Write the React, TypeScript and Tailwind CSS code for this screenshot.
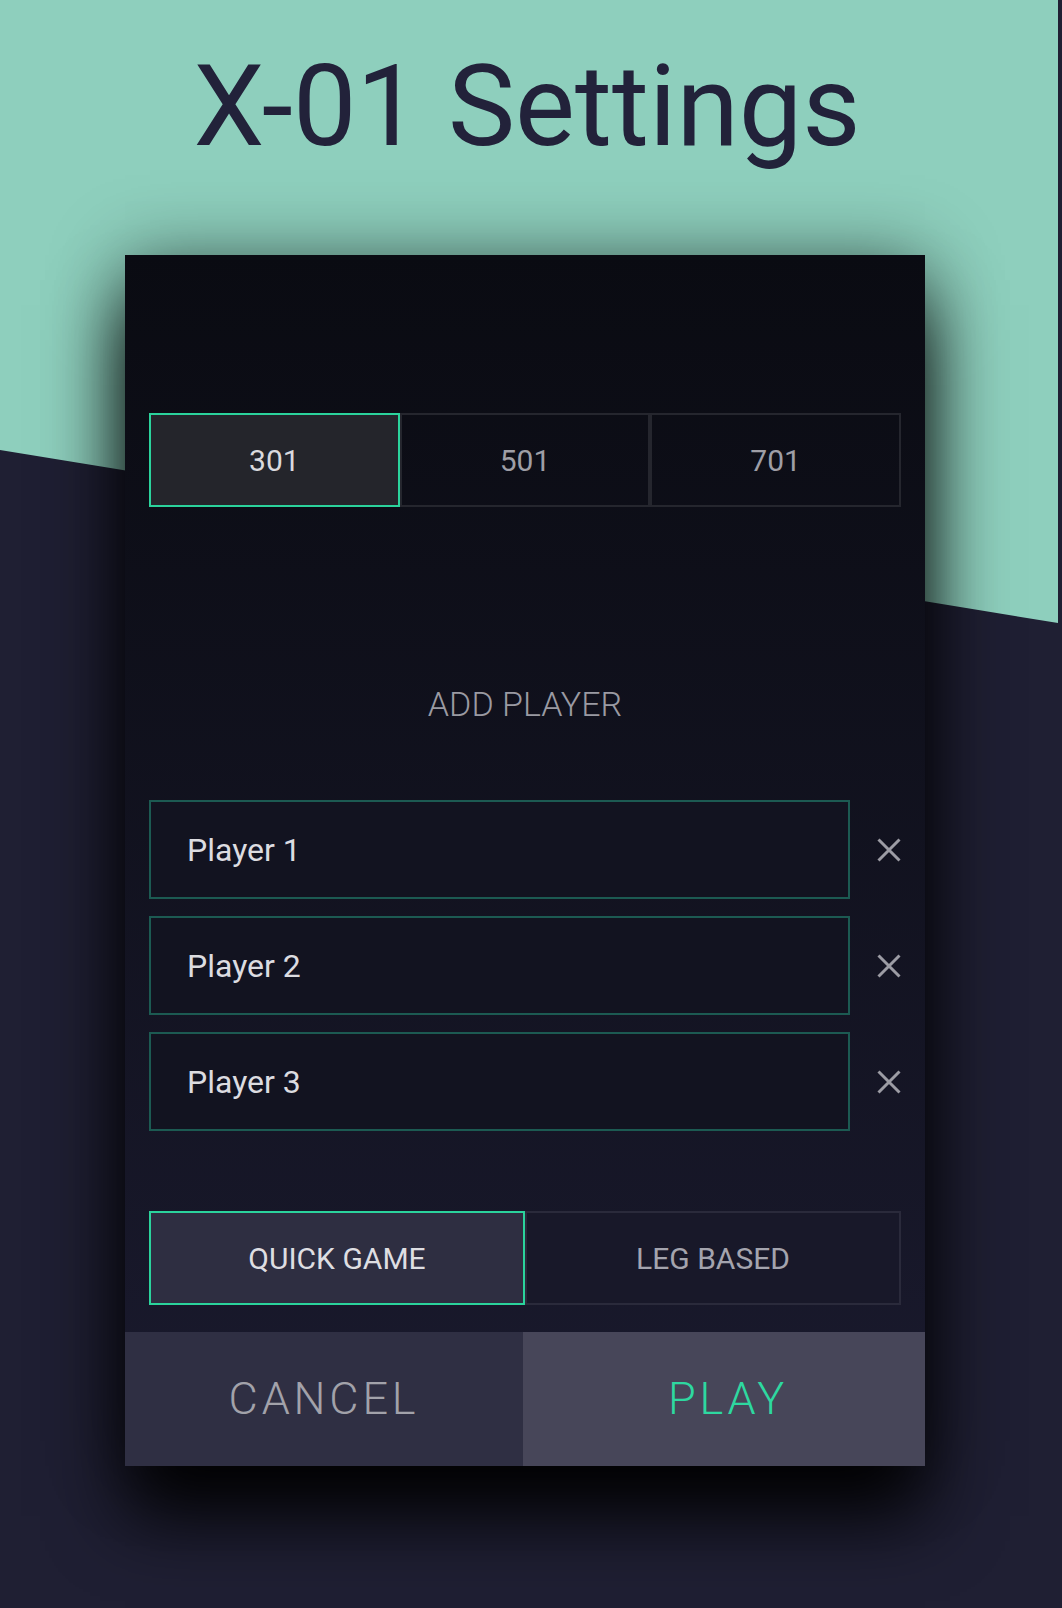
import { useState } from "react"

const font = { fontFamily: "Roboto, 'Noto Sans', sans-serif" }

function CloseIcon() {
  return (
    <svg width="24" height="24" viewBox="0 0 24 24" className="shrink-0">
      <path d="M1.5 1.5 L22.5 22.5 M22.5 1.5 L1.5 22.5" stroke="#9c9ca4" strokeWidth="3" fill="none" />
    </svg>
  )
}

export default function App() {
  const [target, setTarget] = useState("301")
  const [mode, setMode] = useState("quick")
  const players = ["Player 1", "Player 2", "Player 3"]

  return (
    <div className="relative min-h-[1608px] w-full overflow-hidden bg-[#1f1f33]" style={font}>
      <div className="absolute left-0 top-0 h-[623px] w-[1058px] bg-[#8ecfbd] [clip-path:polygon(0_0,100%_0,100%_623px,0_450px)]" />

      <div className="relative flex flex-col items-center">
        <h1 className="mt-[50px] text-[113px] leading-none font-normal text-[#22223a] pr-[8px]">X-01 Settings</h1>

        <div className="mt-[92px] mr-[12px] flex w-[800px] flex-col bg-gradient-to-b from-[#0a0b12] to-[#1a1a2e] shadow-[0_50px_70px_rgba(0,0,0,0.95),0_0_70px_rgba(0,0,0,0.4)]">
          <div className="flex flex-col px-6 pt-[158px]">
            <div className="grid h-[94px] grid-cols-3">
              {["301", "501", "701"].map((t) => {
                const active = t === target
                return (
                  <button
                    key={t}
                    onClick={() => setTarget(t)}
                    className={
                      active
                        ? "border-2 border-[#2bd39c] bg-[#24252b] text-[30px] text-[#dadade]"
                        : "border-2 border-[#25262e] bg-transparent text-[30px] text-[#9e9ea6]"
                    }
                  >
                    {t}
                  </button>
                )
              })}
            </div>

            <button className="mt-[177px] h-[40px] text-[34px] font-light leading-[40px] text-[#9a9aa2]">ADD PLAYER</button>

            <div className="mt-[76px] flex flex-col gap-[17px]">
              {players.map((p) => (
                <div key={p} className="flex items-center">
                  <div className="flex h-[99px] w-[701px] items-center border-2 border-[#1c5a52] bg-[#121320] pl-[36px] text-[32px] text-[#dcdce0]">
                    {p}
                  </div>
                  <div className="ml-[27px]">
                    <CloseIcon />
                  </div>
                </div>
              ))}
            </div>

            <div className="mt-[80px] grid h-[94px] grid-cols-2">
              <button
                onClick={() => setMode("quick")}
                className={
                  mode === "quick"
                    ? "border-2 border-[#2bd39c] bg-[#2e2e41] text-[30px] text-[#dedee2]"
                    : "border-2 border-[#2a2a3b] bg-[#181829] text-[30px] text-[#a4a4ae]"
                }
              >
                QUICK GAME
              </button>
              <button
                onClick={() => setMode("leg")}
                className={
                  mode === "leg"
                    ? "border-2 border-[#2bd39c] bg-[#2e2e41] text-[30px] text-[#dedee2]"
                    : "border-2 border-[#2a2a3b] bg-[#181829] text-[30px] text-[#a4a4ae]"
                }
              >
                LEG BASED
              </button>
            </div>
          </div>

          <div className="mt-[27px] grid h-[134px] grid-cols-[398px_1fr]">
            <button className="bg-[#2f2f43] text-[45px] font-light tracking-[0.085em] text-[#a2a2aa]">CANCEL</button>
            <button className="bg-[#474659] pl-[8px] text-[45px] font-light tracking-[0.085em] text-[#2ed8a0]">PLAY</button>
          </div>
        </div>
      </div>
    </div>
  )
}
